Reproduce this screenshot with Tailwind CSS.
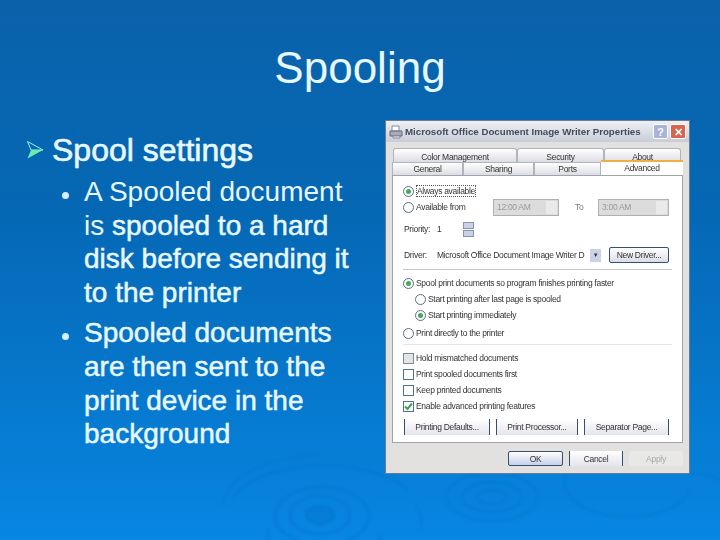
<!DOCTYPE html>
<html lang="en">
<head>
    <meta charset="UTF-8">
    <title>Spooling</title>
    <script src="https://cdn.jsdelivr.net/npm/@tailwindcss/browser@4"></script>
</head>
<body class="m-0">
    <div class="relative w-[720px] h-[540px] overflow-hidden bg-gradient-to-b from-[#0a62aa] via-[#0568b5] via-40% to-[#0786e2] font-['Liberation_Sans',Arial,sans-serif] text-[#e6f7fe]">

        <!-- ripples -->
        <svg class="absolute inset-0 blur-[1px]" width="720" height="540" fill="none" stroke="#0674c8" stroke-opacity="0.4">
            <g stroke-width="2.5">
                <ellipse cx="320" cy="515" rx="14" ry="9" fill="#0674c8" fill-opacity="0.4"/>
                <ellipse cx="320" cy="515" rx="30" ry="19"/>
                <ellipse cx="322" cy="516" rx="47" ry="29"/>
                <path d="M268 530 A56 40 0 0 0 380 535" stroke-width="2"/>
                <path d="M232 500 A95 46 0 0 1 408 490 M416 505 A96 60 0 0 1 422 528" stroke-width="2"/>
                <path d="M224 505 A100 50 0 0 1 320 455" stroke-width="1.5"/>
                <ellipse cx="492" cy="497" rx="15" ry="7"/>
                <ellipse cx="492" cy="497" rx="30" ry="15"/>
                <ellipse cx="492" cy="497" rx="46" ry="24" stroke-width="2"/>
                <path d="M566 476 A60 32 0 0 0 690 490 M690 474 A30 14 0 0 1 720 480" stroke-width="2"/>
            </g>
        </svg>

        <div class="relative flex flex-col">
            <h1 class="pt-[42px] text-center text-[44px] leading-[52px] font-normal">Spooling</h1>

            <div class="flex items-start">
                <!-- left text -->
                <div class="w-[385px] shrink-0 pt-[37px]">
                    <div class="flex items-center h-[38px] pl-[27px] gap-[9px]">
                        <svg width="16" height="18" viewBox="0 0 16 18">
                            <path d="M0.5 0.5 L16 9 L4 9 Z" fill="none" stroke="#9cf0e4" stroke-width="1"/>
                            <path d="M0.5 17.5 L16 9 L4 9 Z" fill="#66f0b0"/>
                        </svg>
                        <div class="text-[32px] leading-[38px] [-webkit-text-stroke:0.6px_#ecfaff]">Spool settings</div>
                    </div>
                    <ul class="pt-[6px] pl-[62px] flex flex-col gap-[7px] text-[28px] leading-[33.6px]">
                        <li class="flex gap-[15px]">
                            <span class="w-[7px] h-[7px] mt-[17px] shrink-0 rounded-full bg-[#d6effc]"></span>
                            <span class="[-webkit-text-stroke:0.5px_#ecfaff]"><span class="[-webkit-text-stroke:0]">A Spooled document<br>is </span>spooled to a hard<br>disk before sending it<br>to the printer</span>
                        </li>
                        <li class="flex gap-[15px]">
                            <span class="w-[7px] h-[7px] mt-[17px] shrink-0 rounded-full bg-[#d6effc]"></span>
                            <span class="[-webkit-text-stroke:0.5px_#ecfaff]">Spooled documents<br>are then sent to the<br>print device in the<br>background</span>
                        </li>
                    </ul>
                </div>

                <!-- properties dialog -->
                <div class="w-[305px] h-[354px] mt-[26px] shrink-0 flex flex-col bg-[#e2e1df] border border-[#6b7a8c] text-[#333] text-[8.5px] tracking-[-0.3px] leading-[16px] whitespace-nowrap blur-[0.35px]">
                    <div class="h-[21px] flex items-center pl-[3px] pr-[3px] bg-gradient-to-b from-[#eef0f4] to-[#c9cdd8]">
                        <svg width="15" height="14" viewBox="0 0 15 14">
                            <path d="M3 1h7v5H3z" fill="#fff" stroke="#889"/>
                            <path d="M1 6h12v5H1z" fill="#aab" stroke="#667"/>
                            <path d="M4 11h7v2H4z" fill="#eee" stroke="#889"/>
                        </svg>
                        <span class="ml-[1px] text-[9.7px] tracking-normal font-bold text-[#444a58]">Microsoft Office Document Image Writer Properties</span>
                        <span class="ml-auto w-[15px] h-[15px] flex items-center justify-center rounded-[2px] bg-[#a9b4d6] border border-white text-white font-bold text-[11px]">?</span>
                        <span class="ml-[2px] w-[16px] h-[15px] flex items-center justify-center rounded-[2px] bg-[#d9654f] border border-white text-white font-bold text-[11px]">✕</span>
                    </div>

                    <div class="pl-[6px] pr-[6px] pt-[6px]">
                        <div class="flex h-[14px] pl-[1px]">
                            <span class="w-[124px] flex justify-center border border-b-0 border-[#b0b4bc] rounded-t-[3px] bg-gradient-to-b from-white to-[#dcdce4]">Color Management</span>
                            <span class="w-[87px] flex justify-center border border-b-0 border-[#b0b4bc] rounded-t-[3px] bg-gradient-to-b from-white to-[#dcdce4]">Security</span>
                            <span class="w-[77px] flex justify-center border border-b-0 border-[#b0b4bc] rounded-t-[3px] bg-gradient-to-b from-white to-[#dcdce4]">About</span>
                        </div>
                        <div class="relative flex items-end h-[13px]">
                            <span class="w-[71px] h-[13px] flex justify-center leading-[13px] border border-b-0 border-[#b0b4bc] bg-gradient-to-b from-white to-[#dcdce4]">General</span>
                            <span class="w-[71px] h-[13px] flex justify-center leading-[13px] border border-b-0 border-[#b0b4bc] bg-gradient-to-b from-white to-[#dcdce4]">Sharing</span>
                            <span class="w-[67px] h-[13px] flex justify-center leading-[13px] border border-b-0 border-[#b0b4bc] bg-gradient-to-b from-white to-[#dcdce4]">Ports</span>
                            <span class="w-[82px] h-[15px] flex justify-center leading-[12px] bg-white border-t-2 border-[#eeb040] relative z-10">Advanced</span>
                        </div>

                        <div class="h-[268px] px-[10px] pt-[7px] bg-white border border-[#a0a4aa] flex flex-col">
                            <label class="h-[16px] flex items-center gap-[2px]">
                                <span class="w-[11px] h-[11px] shrink-0 flex items-center justify-center rounded-full border border-[#55708a] bg-white"><span class="w-[5px] h-[5px] rounded-full bg-[#4aa85a]"></span></span>
                                <span class="border border-dotted border-[#555] leading-[10px]">Always available</span>
                            </label>
                            <div class="h-[16px] flex items-center">
                                <span class="w-[11px] h-[11px] shrink-0 rounded-full border border-[#55708a] bg-white"></span>
                                <span class="ml-[2px] w-[77px]">Available from</span>
                                <span class="w-[66px] h-[17px] flex items-center justify-between pl-[3px] pr-[1px] bg-[#dcdcdc] border border-[#b0b0b0] text-[#999]">12:00 AM<span class="w-[11px] h-[13px] bg-[#eaeaea]"></span></span>
                                <span class="ml-[16px] w-[23px] text-[#777]">To</span>
                                <span class="w-[71px] h-[17px] flex items-center justify-between pl-[3px] pr-[1px] bg-[#dcdcdc] border border-[#b0b0b0] text-[#999]">3:00 AM<span class="w-[11px] h-[13px] bg-[#eaeaea]"></span></span>
                            </div>
                            <div class="h-[16px] mt-[6px] flex items-center">
                                <span class="w-[31px] pl-[1px]">Priority:</span>
                                <span class="w-[41px] h-[17px] flex items-center justify-between pl-[3px] pr-[1px]">1<span class="w-[11px] h-[15px] flex flex-col gap-px"><span class="flex-1 bg-[#c9d2e8] border border-[#8a94a8]"></span><span class="flex-1 bg-[#c9d2e8] border border-[#8a94a8]"></span></span></span>
                            </div>
                            <div class="h-[16px] mt-[10px] flex items-center">
                                <span class="w-[31px] pl-[1px]">Driver:</span>
                                <span class="w-[167px] h-[16px] flex items-center justify-between pl-[3px] overflow-hidden">Microsoft Office Document Image Writer D<span class="w-[11px] h-[13px] shrink-0 flex items-center justify-center bg-[#c9d2e8] text-[6px]">▼</span></span>
                                <span class="ml-[8px] w-[60px] h-[16px] flex items-center justify-center rounded-[2px] border border-[#33506e] bg-gradient-to-b from-white to-[#dcdce8]">New Driver...</span>
                            </div>
                            <div class="h-px mt-[6px] bg-[#c4c4c4]"></div>
                            <div class="h-[16px] mt-[5px] flex items-center gap-[2px]">
                                <span class="w-[11px] h-[11px] shrink-0 flex items-center justify-center rounded-full border border-[#55708a]"><span class="w-[5px] h-[5px] rounded-full bg-[#4aa85a]"></span></span>
                                <span>Spool print documents so program finishes printing faster</span>
                            </div>
                            <div class="h-[16px] pl-[12px] flex items-center gap-[2px]">
                                <span class="w-[11px] h-[11px] shrink-0 rounded-full border border-[#55708a]"></span>
                                <span>Start printing after last page is spooled</span>
                            </div>
                            <div class="h-[16px] pl-[12px] flex items-center gap-[2px]">
                                <span class="w-[11px] h-[11px] shrink-0 flex items-center justify-center rounded-full border border-[#55708a]"><span class="w-[5px] h-[5px] rounded-full bg-[#4aa85a]"></span></span>
                                <span>Start printing immediately</span>
                            </div>
                            <div class="h-[16px] mt-[2px] flex items-center gap-[2px]">
                                <span class="w-[11px] h-[11px] shrink-0 rounded-full border border-[#55708a]"></span>
                                <span>Print directly to the printer</span>
                            </div>
                            <div class="h-px mt-[3px] bg-[#e4e4e4]"></div>
                            <div class="h-[16px] mt-[5px] flex items-center gap-[2px]">
                                <span class="w-[11px] h-[11px] shrink-0 border border-[#7a8a9a] bg-[#e4e4e4]"></span>
                                <span>Hold mismatched documents</span>
                            </div>
                            <div class="h-[16px] flex items-center gap-[2px]">
                                <span class="w-[11px] h-[11px] shrink-0 border border-[#55708a]"></span>
                                <span>Print spooled documents first</span>
                            </div>
                            <div class="h-[16px] flex items-center gap-[2px]">
                                <span class="w-[11px] h-[11px] shrink-0 border border-[#55708a]"></span>
                                <span>Keep printed documents</span>
                            </div>
                            <div class="h-[16px] flex items-center gap-[2px]">
                                <span class="w-[11px] h-[11px] shrink-0 flex items-center justify-center border border-[#55708a]">
                                    <svg width="9" height="9" viewBox="0 0 9 9"><path d="M1 4.5 L3.5 7 L8 1.5" fill="none" stroke="#3fa34d" stroke-width="2"/></svg>
                                </span>
                                <span>Enable advanced printing features</span>
                            </div>
                            <div class="mt-[5px] flex gap-[6px] pl-[1px]">
                                <span class="w-[86px] h-[16px] flex items-center justify-center border-x border-[#33506e] bg-gradient-to-b from-white to-[#e4e4ec]">Printing Defaults...</span>
                                <span class="w-[82px] h-[16px] flex items-center justify-center border-x border-[#33506e] bg-gradient-to-b from-white to-[#e4e4ec]">Print Processor...</span>
                                <span class="w-[85px] h-[16px] flex items-center justify-center border-x border-[#33506e] bg-gradient-to-b from-white to-[#e4e4ec]">Separator Page...</span>
                            </div>
                        </div>

                        <div class="mt-[8px] flex justify-end gap-[6px]">
                            <span class="w-[55px] h-[15px] flex items-center justify-center rounded-[2px] border border-[#33506e] bg-gradient-to-b from-white to-[#c6d0ea]">OK</span>
                            <span class="w-[54px] h-[15px] flex items-center justify-center border-x border-[#33506e] bg-gradient-to-b from-white to-[#e4e4ec]">Cancel</span>
                            <span class="w-[54px] h-[15px] flex items-center justify-center rounded-[2px] bg-[#e8e8e6] text-[#a8a8a8]">Apply</span>
                        </div>
                    </div>
                </div>
            </div>
        </div>
    </div>
</body>
</html>
